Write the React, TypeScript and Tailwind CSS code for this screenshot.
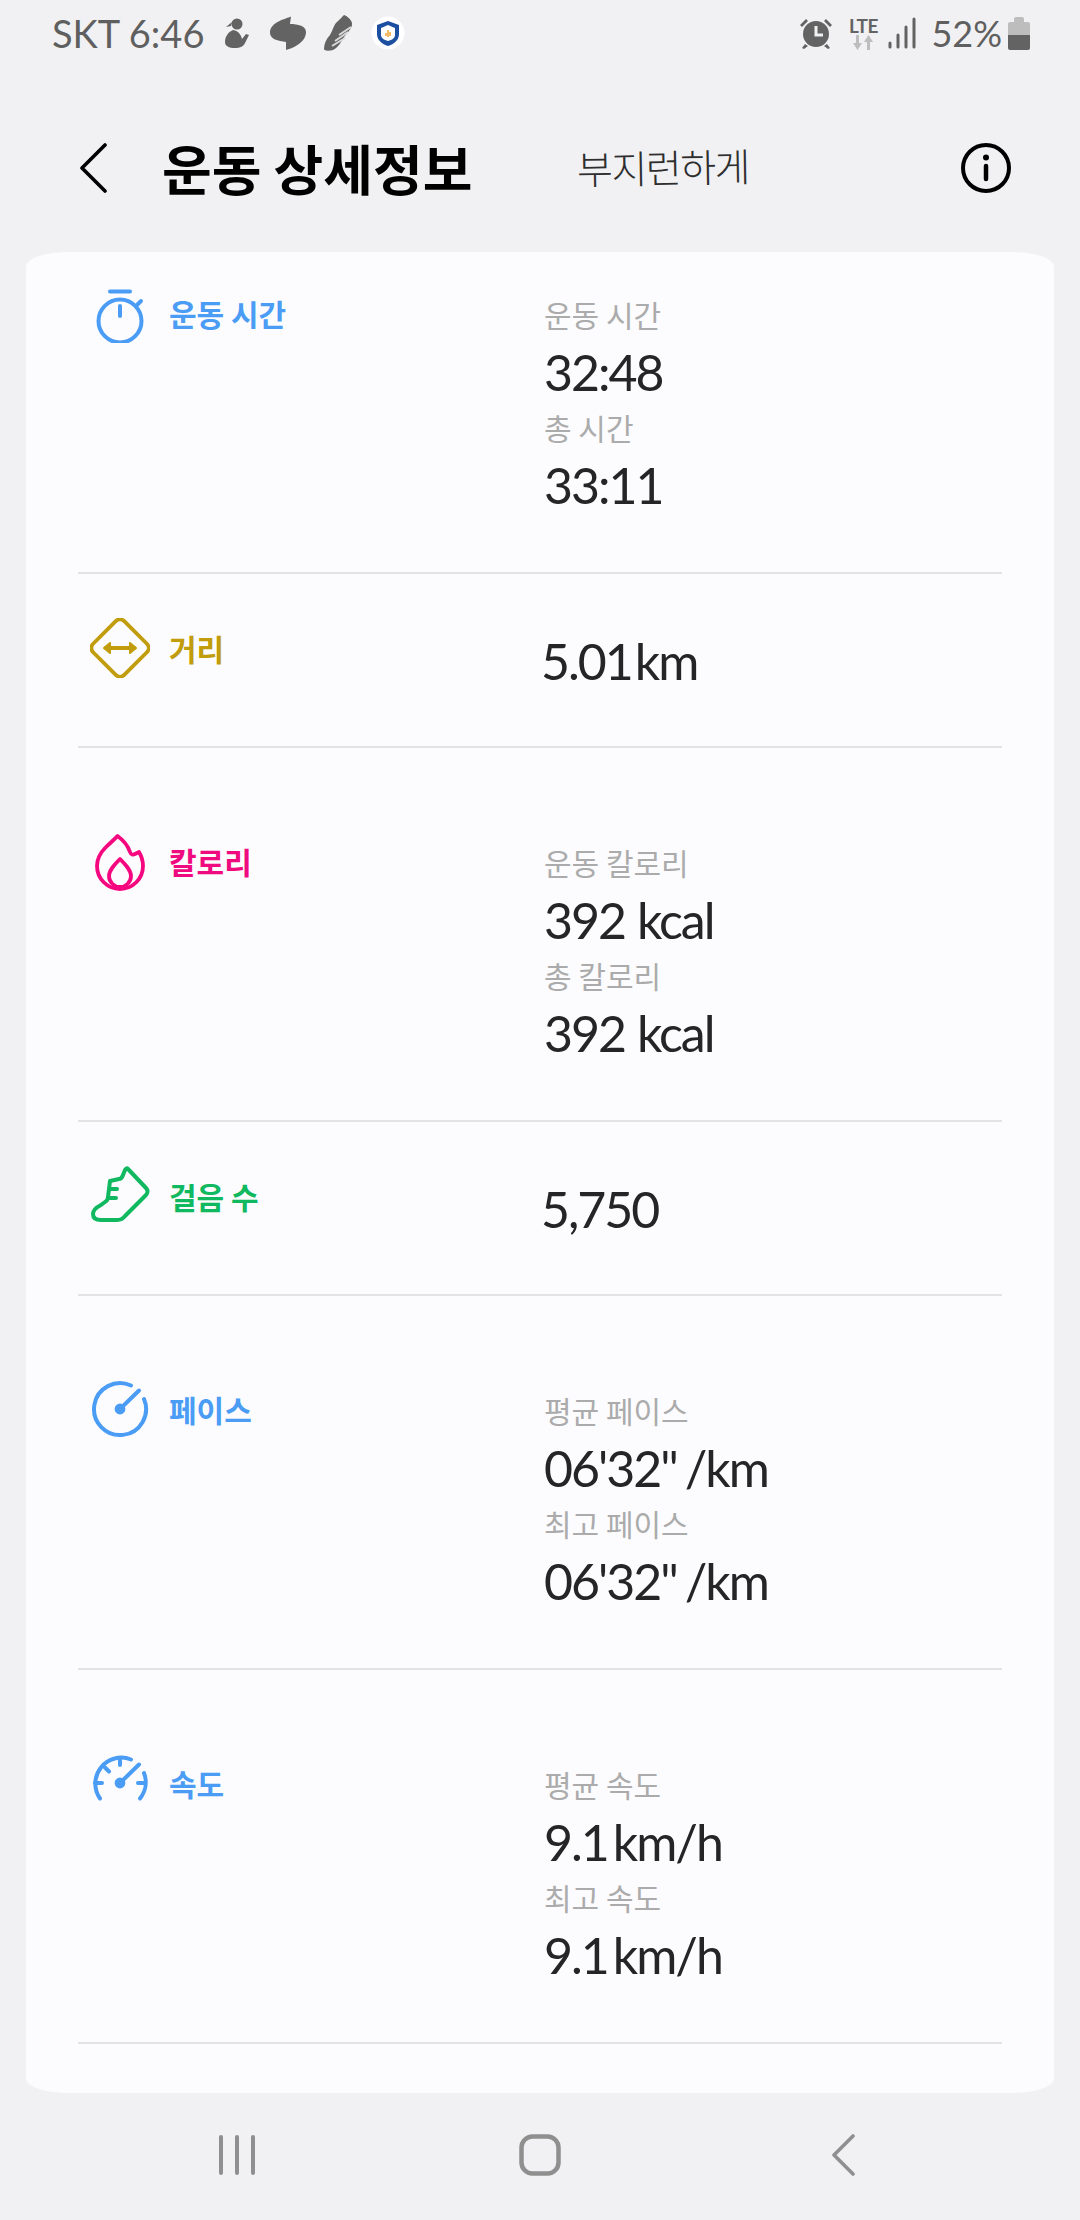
import type { ReactNode } from "react";

type Metric = { label: string; value: ReactNode };

type SectionProps = {
  icon: ReactNode;
  title: string;
  titleClass: string;
  value?: ReactNode;
  metrics?: Metric[];
};

function Stopwatch() {
  return (
    <svg width="60" height="60" viewBox="0 0 60 60" fill="none" stroke="#4b9cf5" strokeWidth="4" strokeLinecap="round">
      <circle cx="30" cy="38" r="21.5" />
      <path d="M20 8.5h20M30 23v10M46 23l5-5" />
    </svg>
  );
}

function Diamond() {
  return (
    <svg width="60" height="60" viewBox="0 0 60 60" fill="none" stroke="#c19c0c" strokeWidth="3.8" strokeLinecap="round" strokeLinejoin="round">
      <rect x="8" y="8" width="44" height="44" rx="6" transform="rotate(45 30 30)" />
      <path d="M16 30h28" strokeWidth="4" />
      <path d="M20 25l-6 5 6 5zM40 25l6 5-6 5z" fill="#c19c0c" strokeWidth="2" />
    </svg>
  );
}

function Flame() {
  return (
    <svg width="60" height="60" viewBox="0 0 60 60" fill="none" stroke="#f5087f" strokeWidth="3.8" strokeLinejoin="round">
      <path d="M27.5 5C33 9 38 15 40 21C41 24 43 24 45 23L49 21C52 26 53 30 53 35A23 23 0 0 1 7 35C7 27 11 21 16 16C20 12 24 9 27.5 5Z" />
      <path d="M30 28C25 33 19 39 19 45C19 51 24 56 30 56C36 56 41 51 41 45C41 39 35 33 30 28Z" />
    </svg>
  );
}

function Shoe() {
  return (
    <svg width="60" height="60" viewBox="0 0 60 60" fill="none" stroke="#10b860" strokeWidth="4" strokeLinecap="round" strokeLinejoin="round">
      <path d="M38 3L56 22C58 24 58 27 56 29L35 50C33 53 30 54 27 54H11C6 54 3 52 3 48C3 44 7 41 11 39L15 36C17 35 18 33 18 31L20 15L29 13C31 13 32 12 33 9L35 4C36 2 37 2 38 3Z" />
      <path d="M20 23h7M18 32h8" />
    </svg>
  );
}

function PaceDial() {
  return (
    <svg width="60" height="60" viewBox="0 0 60 60" fill="none" stroke="#4b9cf5" strokeWidth="4" strokeLinecap="round">
      <path d="M41 6.5A26 26 0 1 0 54 20" />
      <path d="M30 30L49 11.5" />
      <circle cx="30" cy="30" r="3.4" fill="#4b9cf5" />
    </svg>
  );
}

function Speedometer() {
  return (
    <svg width="60" height="60" viewBox="0 0 60 60" fill="none" stroke="#4b9cf5" strokeWidth="4" strokeLinecap="round">
      <path d="M10 45.5A26 26 0 0 1 41 6.5M54 20A26 26 0 0 1 50 45.5" />
      <path d="M30 5v7M15 14.5l4 4M5 30h7M48 30h7M30 30L49 11.5" />
      <circle cx="30" cy="30" r="3.4" fill="#4b9cf5" />
    </svg>
  );
}

function Section({ icon, title, titleClass, value, metrics }: SectionProps) {
  const compact = !metrics;

  return (
    <section
      className={`mx-[52px] flex items-start border-b-2 border-[#e3e3e5] ${compact ? "h-[174px] pt-[44px]" : "h-[374px] pt-[83px]"}`}
    >
      <div className="flex w-[466px] shrink-0 items-center pl-3">
        {icon}
        <h2 className={`ml-[19px] text-[30px] leading-[60px] font-bold ${titleClass}`}>{title}</h2>
      </div>

      {value ? (
        <p className="-ml-[3px] pt-[10px] font-['Lato','Noto_Sans_CJK_KR',sans-serif] text-[50px] leading-[66px] tracking-[-2px] text-[#252527]">
          {value}
        </p>
      ) : (
        <dl className="pt-[9px]">
          {metrics?.map((metric) => (
            <div key={metric.label}>
              <dt className="text-[30px] leading-[44px] text-[#ababab]">{metric.label}</dt>
              <dd className="pt-[4px] font-['Lato','Noto_Sans_CJK_KR',sans-serif] text-[50px] leading-[65px] tracking-[-2px] text-[#252527]">
                {metric.value}
              </dd>
            </div>
          ))}
        </dl>
      )}
    </section>
  );
}

function StatusBar() {
  return (
    <div className="flex h-[64px] shrink-0 items-center pr-[50px] pl-[52px] pt-[2px] font-['Lato',sans-serif] text-[36px] text-[#5f5f5f]">
      <span className="w-[172px] text-[38px] leading-none whitespace-nowrap">SKT 6:46</span>

      <svg width="26" height="32" viewBox="0 0 26 32" fill="#636363">
        <circle cx="13" cy="7" r="5.5" />
        <path d="M8 5L2 10L7 9ZM9 13C4 15 1 20 1 25C1 29 5 31 11 31C16 31 20 29 21 26L25 18L22 17L18 22C17 18 15 14 9 13Z" />
      </svg>
      <svg className="ml-[18px]" width="40" height="36" viewBox="0 0 40 36" fill="#636363">
        <path d="M23 1.500C14 5 2 8 2 18C2 24 10 26 18 27L18 35C26 33 38 27 38 17C38 11 30 9 22 9Z" />
      </svg>
      <svg className="ml-[15px]" width="30" height="38" viewBox="0 0 30 38" fill="none">
        <path d="M21 1C24 2 28 5 29 9C30 13 25 18 21 23C18 28 15 34 10 36C6 37 1 37 1 35C1 30 3 25 7 21C10 16 11 10 14 8C17 5 19 3 21 1Z" fill="#636363" />
        <path d="M9 32L22 24M12 27L25 18M16 21L28 13" stroke="#d9d9d9" strokeWidth="2" />
      </svg>
      <svg className="ml-[18px]" width="34" height="34" viewBox="0 0 34 34">
        <circle cx="17" cy="17" r="16.5" fill="#ffffff" />
        <path d="M17 5L28 9V18C28 24 23 28 17 30C11 28 6 24 6 18V9Z" fill="#1c4fa0" />
        <path d="M10 12L17 9L24 12V19C24 22 21 24 17 25C13 24 10 22 10 19Z" fill="#ffffff" />
        <path d="M15 17v3M17 14v7M19 16v4" stroke="#ee9f25" strokeWidth="1.4" />
      </svg>

      <div className="ml-auto flex items-center">
        <svg width="34" height="32" viewBox="0 0 34 32" fill="#636363">
          <circle cx="17" cy="17" r="13" />
          <path d="M1 8L7 2L9 4L3 10ZM33 8L27 2L25 4L31 10ZM6 27L3 31L5 32L9 29ZM28 27L31 31L29 32L25 29Z" />
          <path d="M17 9V18H24" fill="none" stroke="#f0f1f3" strokeWidth="3" />
        </svg>
        <div className="ml-[14px] flex w-[32px] flex-col items-center">
          <span className="text-[19px] leading-[18px] font-bold tracking-[-0.5px] text-[#636363]">LTE</span>
          <svg width="24" height="15" viewBox="0 0 24 15" fill="#bdbdbd">
            <path d="M5 0h3v8h3l-4.5 7L2 8h3zM16 15h3V7h3L17.500 0 13 7h3z" />
          </svg>
        </div>
        <svg className="ml-[9px]" width="28" height="32" viewBox="0 0 28 32" fill="none" stroke="#636363" strokeWidth="3" strokeLinecap="round">
          <path d="M2 26v4M10 18v12M18 10v20M26 2v28" />
        </svg>
        <span className="ml-[15px] text-[36px] leading-none">52%</span>
        <div className="ml-[6px] flex w-[22px] flex-col items-center">
          <div className="h-[5px] w-[10px] rounded-t-[2px] bg-[#bdbdbd]" />
          <div className="h-[13px] w-[22px] rounded-t-[2px] bg-[#bdbdbd]" />
          <div className="h-[15px] w-[22px] rounded-b-[2px] bg-[#636363]" />
        </div>
      </div>
    </div>
  );
}

function Header() {
  return (
    <header className="flex h-[188px] shrink-0 items-center pt-[20px] pr-[69px] pl-[80px] text-black">
      <svg className="w-[82px] shrink-0" width="82" height="50" viewBox="0 0 82 50" fill="none" stroke="#000000" strokeWidth="3.6" strokeLinecap="round" strokeLinejoin="round">
        <path d="M25 2L2 25L25 48" />
      </svg>
      <h1 className="w-[415px] shrink-0 text-[54px] leading-none font-bold">운동 상세정보</h1>
      <span className="-rotate-1 pb-[4px] text-[39px] leading-none font-extralight tracking-[-1.5px] whitespace-nowrap text-[#2e2e2e]">부지런하게</span>
      <svg className="ml-auto shrink-0" width="50" height="50" viewBox="0 0 50 50" fill="none" stroke="#000000" strokeWidth="4">
        <circle cx="25" cy="25" r="23" />
        <circle cx="25" cy="14.500" r="3" fill="#000000" stroke="none" />
        <path d="M25 23v13" strokeLinecap="round" strokeWidth="4.500" />
      </svg>
    </header>
  );
}

function NavBar() {
  return (
    <nav className="grid flex-1 grid-cols-3 items-center px-[85px] pb-[4px]">
      <svg className="justify-self-center" width="36" height="40" viewBox="0 0 36 40" fill="none" stroke="#8f8f8f" strokeWidth="4" strokeLinecap="round">
        <path d="M2 2v36M18 2v36M34 2v36" />
      </svg>
      <svg className="justify-self-center" width="42" height="42" viewBox="0 0 42 42" fill="none" stroke="#8f8f8f" strokeWidth="4.500">
        <rect x="2.500" y="2.500" width="37" height="37" rx="11" />
      </svg>
      <svg className="justify-self-center" width="24" height="42" viewBox="0 0 24 42" fill="none" stroke="#8f8f8f" strokeWidth="3.600" strokeLinecap="round" strokeLinejoin="round">
        <path d="M22 2L3 21L22 40" />
      </svg>
    </nav>
  );
}

export default function App() {
  return (
    <div className="flex h-[2220px] w-[1080px] flex-col overflow-hidden bg-[#f1f1f3] font-['Noto_Sans_CJK_KR','Noto_Sans',sans-serif]">
      <StatusBar />
      <Header />

      <main className="mx-[26px] h-[1841px] shrink-0 overflow-hidden rounded-[44px/14px] bg-[#fcfcfe]">
        {/* list is scrolled a little, the first row sits under the top edge */}
        <div className="-mt-[52px]">
          <Section
            icon={<Stopwatch />}
            title="운동 시간"
            titleClass="text-[#4b9cf5]"
            metrics={[
              { label: "운동 시간", value: "32:48" },
              { label: "총 시간", value: "33:11" },
            ]}
          />
          <Section
            icon={<Diamond />}
            title="거리"
            titleClass="text-[#c19c0c]"
            value={<>5.01<span className="ml-[3px]">km</span></>}
          />
          <Section
            icon={<Flame />}
            title="칼로리"
            titleClass="text-[#ef0a80]"
            metrics={[
              { label: "운동 칼로리", value: <>392<span className="ml-[12px]">kcal</span></> },
              { label: "총 칼로리", value: <>392<span className="ml-[12px]">kcal</span></> },
            ]}
          />
          <Section icon={<Shoe />} title="걸음 수" titleClass="text-[#10b860]" value="5,750" />
          <Section
            icon={<PaceDial />}
            title="페이스"
            titleClass="text-[#4b9cf5]"
            metrics={[
              { label: "평균 페이스", value: <>06'32"<span className="ml-[8px]">/km</span></> },
              { label: "최고 페이스", value: <>06'32"<span className="ml-[8px]">/km</span></> },
            ]}
          />
          <Section
            icon={<Speedometer />}
            title="속도"
            titleClass="text-[#4b9cf5]"
            metrics={[
              { label: "평균 속도", value: <>9.1<span className="ml-[5px]">km/h</span></> },
              { label: "최고 속도", value: <>9.1<span className="ml-[5px]">km/h</span></> },
            ]}
          />
        </div>
      </main>

      <NavBar />
    </div>
  );
}
